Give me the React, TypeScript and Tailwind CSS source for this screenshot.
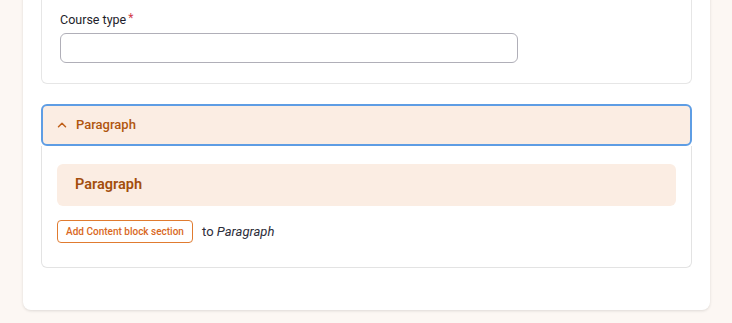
import React from "react";

export default function App() {
  return (
    <div className="min-h-[323px] bg-[#fcf7f3] pb-[14px] pl-[23px] pr-[22px] overflow-hidden" style={{ fontFamily: "Roboto, 'Noto Sans', sans-serif" }}>
      <div className="-mt-[12px] rounded-[8px] bg-white shadow-[0_1px_3px_rgba(0,0,0,0.12)] px-[18px] pb-[42px]">
        <div className="rounded-b-[6px] border border-t-0 border-[#e6e6e6] px-[18px] pt-[24px] pb-[20px]">
          <div className="flex items-start text-[12.5px] leading-[16px] text-[#1d1d2b] font-normal">
            Course type<span className="text-[#d23b4a] text-[12px] leading-[12px] ml-[2px]">*</span>
          </div>
          <div className="mt-[5px] h-[30px] w-[458px] rounded-[6px] border border-[#b0afb8] bg-white" />
        </div>

        <div className="mt-[20px]">
          <div className="flex h-[42px] items-center rounded-[6px] border-2 border-[#5e9de4] bg-[#fbede3] pl-[13px]">
            <svg width="12" height="12" viewBox="0 0 24 24" fill="none" stroke="#c0601a" strokeWidth="3" strokeLinecap="round" strokeLinejoin="round">
              <path d="M5 15.5l7-7 7 7" />
            </svg>
            <span className="ml-[8px] text-[13px] font-medium text-[#b0560f]">Paragraph</span>
          </div>
          <div className="rounded-b-[6px] border border-t-0 border-[#e3e3e3] px-[15px] pt-[18px] pb-[24px]">
            <div className="flex h-[42px] items-center rounded-[6px] bg-[#fbede3] pl-[18px] text-[14.5px] font-semibold text-[#a34e0c]">
              Paragraph
            </div>
            <div className="mt-[14px] flex items-center">
              <button className="h-[23px] w-[136px] rounded-[4px] border-[1.5px] border-[#e07b30] bg-white text-[10px] font-medium text-[#d9681e]">
                Add Content block section
              </button>
              <span className="ml-[9px] text-[13px] text-[#2d2d3a]">
                to <em className="italic">Paragraph</em>
              </span>
            </div>
          </div>
        </div>
      </div>
    </div>
  );
}
